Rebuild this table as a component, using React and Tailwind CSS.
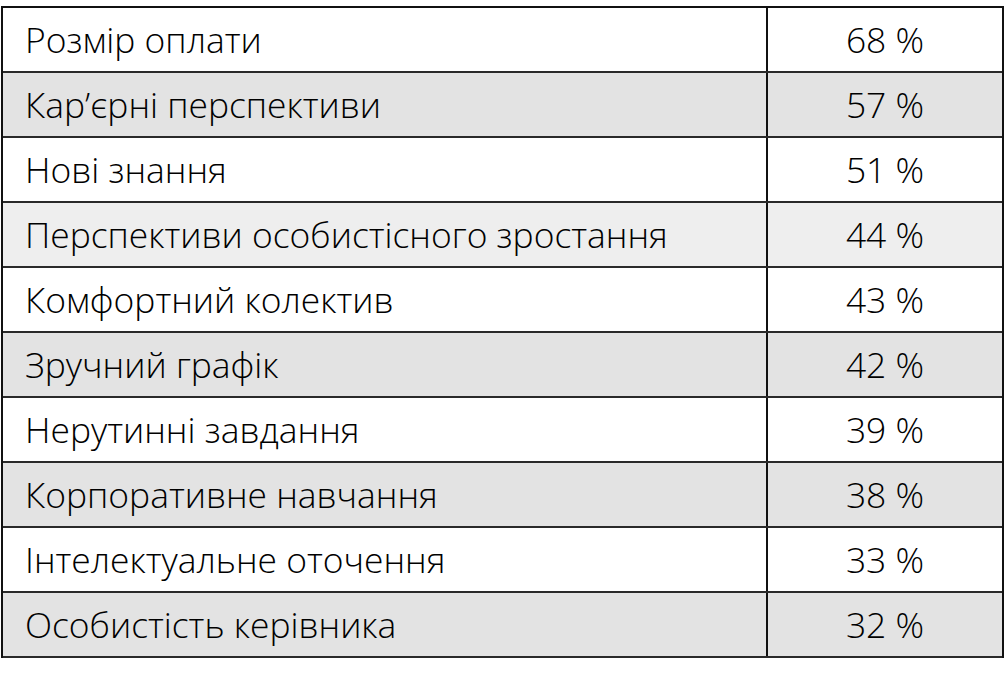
const rows = [
  ["Розмір оплати", "68 %", "bg-white"],
  ["Кар’єрні перспективи", "57 %", "bg-[#e3e3e3]"],
  ["Нові знання", "51 %", "bg-white"],
  ["Перспективи особистісного зростання", "44 %", "bg-[#eeeeee]"],
  ["Комфортний колектив", "43 %", "bg-white"],
  ["Зручний графік", "42 %", "bg-[#e3e3e3]"],
  ["Нерутинні завдання", "39 %", "bg-white"],
  ["Корпоративне навчання", "38 %", "bg-[#e3e3e3]"],
  ["Інтелектуальне оточення", "33 %", "bg-white"],
  ["Особистість керівника", "32 %", "bg-[#e3e3e3]"],
];

export default function App() {
  return (
    <div className="w-[1004px] h-[687px] bg-white overflow-hidden pt-[6px] pl-[1px]" style={{ fontFamily: '"Open Sans", "Noto Sans", sans-serif' }}>
      <div className="w-[1003px] border-[2px] border-[#111] border-b-0">
        {rows.map(([label, val, bg], i) => (
          <div key={i} className={`flex h-[65px] border-b-[2px] border-[#2a2a2a] ${bg}`}>
            <div className="w-[765px] border-r-[2px] border-[#111] flex items-center pl-[22px] text-[35.4px] font-light text-black leading-none whitespace-nowrap">
              {label}
            </div>
            <div className="flex-1 flex items-center justify-center text-[35.4px] font-light text-black leading-none">
              {val}
            </div>
          </div>
        ))}
      </div>
    </div>
  );
}
